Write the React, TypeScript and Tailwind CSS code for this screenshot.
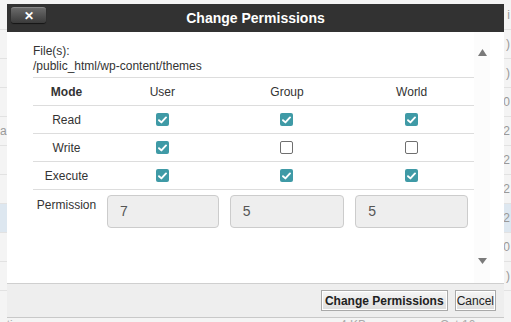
import React from "react";

const Check = ({ on }: { on: boolean }) =>
  on ? (
    <span className="flex h-[13px] w-[13px] items-center justify-center rounded-[2px] bg-[#3f9aa6]">
      <svg width="9" height="8" viewBox="0 0 9 8">
        <path d="M1 4.2 L3.4 6.4 L8 1.4" fill="none" stroke="#fff" strokeWidth="1.9" strokeLinecap="round" strokeLinejoin="round" />
      </svg>
    </span>
  ) : (
    <span className="block h-[13px] w-[13px] rounded-[2px] border border-[#6f6f6f] bg-white" />
  );

const rows: [string, boolean, boolean, boolean][] = [
  ["Read", true, true, true],
  ["Write", true, false, false],
  ["Execute", true, true, true],
];

const bgRows = [
  { h: 30, l: "", r: "i", c: "text-[#2a6fb0]" },
  { h: 29, l: "", r: ")" },
  { h: 29, l: "", r: ")" },
  { h: 29, l: "", r: "0" },
  { h: 29, l: "a", r: "2" },
  { h: 29, l: "", r: "2" },
  { h: 29, l: "", r: "2" },
  { h: 29, l: "", r: "2", hl: true },
  { h: 29, l: "", r: "0" },
  { h: 29, l: "", r: ")" },
];

export default function App() {
  return (
    <div
      className="relative h-[322px] w-[511px] overflow-hidden bg-[#f4f4f4] text-[#333]"
      style={{ fontFamily: '"Liberation Sans", Arial, sans-serif' }}
    >
      {/* background page */}
      <div className="flex flex-col">
        {bgRows.map((r, i) => (
          <div
            key={i}
            className={`flex items-center justify-between border-b border-[#e2e2e2] text-[12px] ${r.hl ? "bg-[#dde7f0]" : ""}`}
            style={{ height: r.h }}
          >
            <span className="text-[#999]">{r.l}</span>
            <span className={`pr-[1px] text-[#999] ${r.c ?? ""}`}>{r.r}</span>
          </div>
        ))}
        <div className="flex h-[50px] items-start pt-[27px] text-[12px] leading-[14px] text-[#aaa]">
          <span className="w-[340px]">ntig</span>
          <span className="w-[100px]">4 KB</span>
          <span>Oct 10</span>
        </div>
      </div>

      {/* dialog */}
      <div className="absolute left-[7px] top-[4px] flex h-[314px] w-[497px] flex-col border-b border-[#c8c8c8] bg-white">
        <div className="relative flex h-[28px] shrink-0 items-center justify-center bg-[#323232]">
          <button className="absolute left-[4px] top-[3px] flex h-[16px] w-[35px] items-center justify-center rounded-[3px] border-t border-[#888] bg-gradient-to-b from-[#6a6a6a] to-[#3b3b3b] shadow-[0_1px_1px_rgba(0,0,0,0.6)]">
            <span className="text-[12px] font-bold leading-none text-white">✕</span>
          </button>
          <span className="text-[14px] font-bold text-white">Change Permissions</span>
        </div>

        <div className="flex h-[251px] shrink-0">
          <div className="w-[467px] pl-[26px] pt-[12px]">
            <div className="text-[12px] leading-[15px]">File(s):</div>
            <div className="text-[12px] leading-[15px]">/public_html/wp-content/themes</div>
            <div className="mt-[3px] grid w-[441px] grid-cols-[67px_1fr_1fr_1fr] text-[12px]">
              <div className="flex h-[28px] items-center justify-center border-t border-[#ddd] font-bold">Mode</div>
              <div className="flex h-[28px] items-center justify-center border-t border-[#ddd]">User</div>
              <div className="flex h-[28px] items-center justify-center border-t border-[#ddd]">Group</div>
              <div className="flex h-[28px] items-center justify-center border-t border-[#ddd]">World</div>
              {rows.map(([label, a, b, c]) => (
                <React.Fragment key={label}>
                  <div className="flex h-[28px] items-center justify-center border-t border-[#ddd]">{label}</div>
                  <div className="flex h-[28px] items-center justify-center border-t border-[#ddd]"><Check on={a} /></div>
                  <div className="flex h-[28px] items-center justify-center border-t border-[#ddd]"><Check on={b} /></div>
                  <div className="flex h-[28px] items-center justify-center border-t border-[#ddd]"><Check on={c} /></div>
                </React.Fragment>
              ))}
              <div className="flex justify-center border-t border-[#ddd] pt-[8px] leading-[14px]">Permission</div>
              <div className="border-t border-[#ddd] pl-[7px] pr-[6px] pt-[5px]">
                <div className="flex h-[33px] items-center rounded-[4px] border border-[#ccc] bg-[#eee] pl-[12px] text-[14px] text-[#555]">7</div>
              </div>
              <div className="border-t border-[#ddd] pl-[5px] pr-[5px] pt-[5px]">
                <div className="flex h-[33px] items-center rounded-[4px] border border-[#ccc] bg-[#eee] pl-[12px] text-[14px] text-[#555]">5</div>
              </div>
              <div className="border-t border-[#ddd] pl-[6px] pr-[6px] pt-[5px]">
                <div className="flex h-[33px] items-center rounded-[4px] border border-[#ccc] bg-[#eee] pl-[12px] text-[14px] text-[#555]">5</div>
              </div>
            </div>
          </div>
          <div className="flex w-[16px] flex-col items-center justify-between bg-[#fcfcfc] pb-[19px] pt-[17px]">
            <svg width="9" height="7" viewBox="0 0 9 7"><path d="M4.5 0 L9 7 L0 7 Z" fill="#7a7a7a" /></svg>
            <svg width="9" height="6" viewBox="0 0 9 6"><path d="M0 0 L9 0 L4.5 6 Z" fill="#7a7a7a" /></svg>
          </div>
        </div>

        <div className="flex flex-1 items-center justify-end gap-[7px] border-t border-[#cfcfcf] bg-[#eeeeee] pr-[8px]">
          <button className="h-[21px] border border-[#a9a9a9] bg-gradient-to-b from-[#f6f6f6] to-[#dedede] px-[3px] text-[12px] font-bold text-[#222] shadow-[inset_0_0_0_1px_#fff]">
            Change Permissions
          </button>
          <button className="h-[21px] border border-[#a9a9a9] bg-gradient-to-b from-[#f6f6f6] to-[#dedede] px-[1px] text-[12px] text-[#222] shadow-[inset_0_0_0_1px_#fff]">
            Cancel
          </button>
        </div>
      </div>
    </div>
  );
}
